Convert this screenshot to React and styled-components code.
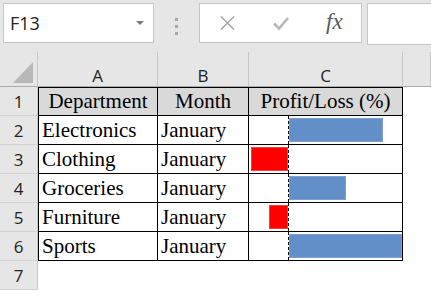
import React from "react";
import styled, { createGlobalStyle } from "styled-components";

const GlobalStyle = createGlobalStyle`
   html, body {
      margin: 0;
      padding: 0;
      background: #ffffff;
      overflow: hidden;
   }
`;

// formula bar
const Toolbar = styled.div`
   display: flex;
   align-items: flex-start;
   height: 52px;
   padding: 3px 0 0 3px;
   box-sizing: border-box;
   background: #e6e6e6;
   font-family: "Open Sans", "Liberation Sans", sans-serif;
`;

const NameBox = styled.div`
   display: flex;
   align-items: center;
   justify-content: space-between;
   width: 151px;
   height: 40px;
   box-sizing: border-box;
   padding: 0 9px 0 6px;
   background: #fff;
   border: 1px solid #c6c6c6;
   font-size: 18px;
   color: #222;
`;

const Caret = styled.span`
   width: 0;
   height: 0;
   border-left: 4px solid transparent;
   border-right: 4px solid transparent;
   border-top: 4px solid #7a7a7a;
`;

const Grip = styled.div`
   display: flex;
   flex-direction: column;
   gap: 4px;
   margin: 15px 21px 0 21px;
   span {
      width: 3px;
      height: 3px;
      background: #a6a6a6;
   }
`;

const FxBox = styled.div`
   display: flex;
   align-items: center;
   gap: 36px;
   width: 163px;
   height: 40px;
   box-sizing: border-box;
   padding: 0 0 0 19px;
   background: #fff;
   border: 1px solid #c6c6c6;
`;

const Fx = styled.span`
   font-family: "Liberation Serif", serif;
   font-style: italic;
   font-size: 23px;
   line-height: 1;
   margin-top: -3px;
   color: #5a5a5a;
`;

const Formula = styled.div`
   flex: 1;
   height: 40px;
   margin-left: 5px;
   background: #fff;
   border: 1px solid #c6c6c6;
   border-right: none;
`;

// sheet
const Sheet = styled.div`
   display: grid;
   grid-template-columns: 38px 120px 91px 154px 1fr;
   grid-template-rows: 35px repeat(7, 29px);
   background: #fff;
`;

const ColHead = styled.div`
   display: flex;
   align-items: center;
   justify-content: center;
   padding-top: 12px;
   box-sizing: border-box;
   background: #e6e6e6;
   border-right: 1px solid #c8c8c8;
   border-bottom: 1px solid #ababab;
   font-family: "Open Sans", "Liberation Sans", sans-serif;
   font-size: 17px;
   color: #222;
`;

const Corner = styled(ColHead)`
   align-items: flex-end;
   justify-content: flex-end;
   padding: 0 4px 3px 0;
   &::after {
      content: "";
      width: 20px;
      height: 21px;
      background: #b8b8b8;
      clip-path: polygon(100% 0, 100% 100%, 0 100%);
   }
`;

const RowHead = styled.div`
   display: flex;
   align-items: center;
   justify-content: center;
   box-sizing: border-box;
   background: #e6e6e6;
   border-right: 1px solid #c8c8c8;
   border-bottom: 1px solid #d0d0d0;
   font-family: "Open Sans", "Liberation Sans", sans-serif;
   font-size: 17px;
   color: #222;
`;

const Cell = styled.div`
   display: flex;
   align-items: center;
   justify-content: ${(p) => (p.$head ? "center" : "flex-start")};
   box-sizing: border-box;
   padding-left: ${(p) => (p.$head ? "0" : "3px")};
   background: ${(p) => (p.$head ? "#d9d9d9" : "#fff")};
   border-right: 1px solid #000;
   border-bottom: 1px solid #000;
   border-top: ${(p) => (p.$head ? "1px solid #000" : "none")};
   border-left: ${(p) => (p.$first ? "1px solid #000" : "none")};
   font-family: "Liberation Serif", "Times New Roman", serif;
   font-size: 21px;
   color: #000;
   white-space: nowrap;
   overflow: hidden;
`;

const BarCell = styled.div`
   display: flex;
   align-items: stretch;
   box-sizing: border-box;
   border-right: 1px solid #000;
   border-bottom: 1px solid #000;
`;

const NegZone = styled.div`
   display: flex;
   align-items: center;
   justify-content: flex-end;
   width: 39px;
   padding-left: 2px;
   box-sizing: border-box;
`;

const PosZone = styled.div`
   display: flex;
   align-items: center;
   flex: 1;
   border-left: 1px dashed #000;
`;

const Bar = styled.div`
   height: 24px;
   box-sizing: border-box;
   background: ${(p) => (p.$neg ? "#ff0000" : "#628fc7")};
   border: 1px solid ${(p) => (p.$neg ? "#ff3a3a" : "#7a9fd0")};
`;

const Blank = styled.div`
   background: #fff;
`;

const rows = [
   { dept: "Electronics", month: "January", value: 15 },
   { dept: "Clothing", month: "January", value: -5 },
   { dept: "Groceries", month: "January", value: 9.1 },
   { dept: "Furniture", month: "January", value: -2.6 },
   { dept: "Sports", month: "January", value: 18 },
];

const maxPos = Math.max(...rows.map((r) => r.value));
const maxNeg = Math.max(...rows.map((r) => -r.value));

function DataBar({ value }) {
   return (
      <BarCell>
         <NegZone>
            {value < 0 && <Bar $neg style={{ width: `${(-value / maxNeg) * 100}%` }} />}
         </NegZone>
         <PosZone>
            {value > 0 && <Bar style={{ width: `${(value / maxPos) * 100}%` }} />}
         </PosZone>
      </BarCell>
   );
}

export default function App() {
   return (
      <>
         <GlobalStyle />
         <Toolbar>
            <NameBox>
               F13
               <Caret />
            </NameBox>
            <Grip>
               <span />
               <span />
               <span />
            </Grip>
            <FxBox>
               <svg width="17" height="16" viewBox="0 0 17 16">
                  <path d="M2 1.5 L15 14.5 M15 1.5 L2 14.5" stroke="#a8a8a8" strokeWidth="1.6" fill="none" />
               </svg>
               <svg width="18" height="15" viewBox="0 0 18 15">
                  <path d="M2 7.5 L7 12.5 L16 2" stroke="#b8b8b8" strokeWidth="2.6" fill="none" />
               </svg>
               <Fx>fx</Fx>
            </FxBox>
            <Formula />
         </Toolbar>
         <Sheet>
            <Corner />
            <ColHead>A</ColHead>
            <ColHead>B</ColHead>
            <ColHead>C</ColHead>
            <ColHead />

            <RowHead>1</RowHead>
            <Cell $head $first>Department</Cell>
            <Cell $head>Month</Cell>
            <Cell $head>Profit/Loss (%)</Cell>
            <Blank />

            {rows.map((r, i) => (
               <React.Fragment key={r.dept}>
                  <RowHead>{i + 2}</RowHead>
                  <Cell $first>{r.dept}</Cell>
                  <Cell>{r.month}</Cell>
                  <DataBar value={r.value} />
                  <Blank />
               </React.Fragment>
            ))}

            <RowHead>7</RowHead>
            <Blank />
            <Blank />
            <Blank />
            <Blank />
         </Sheet>
      </>
   );
}
